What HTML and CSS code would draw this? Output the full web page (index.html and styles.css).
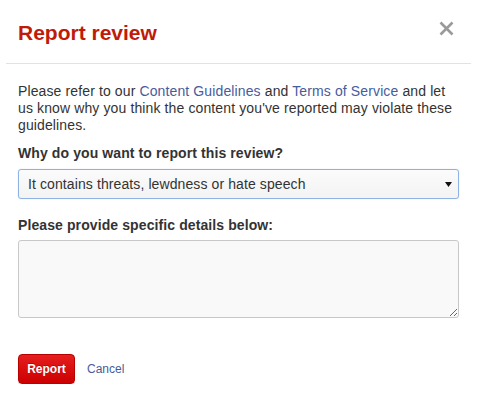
FILE: index.html
```html
<!DOCTYPE html>
<html lang="en">
<head>
<meta charset="utf-8">
<title>Report review</title>
<link rel="stylesheet" href="styles.css">
</head>
<body>
<div class="modal">
  <div class="modal-header">
    <h2 class="modal-title">Report review</h2>
    <button class="close" type="button" aria-label="Close">
      <svg width="15" height="15" viewBox="0 0 15 15"><path d="M1.5 1.5 L13.5 13.5 M13.5 1.5 L1.5 13.5" stroke="#9a9a9a" stroke-width="2.6" stroke-linecap="butt"/></svg>
    </button>
  </div>
  <div class="modal-body">
    <p class="intro">Please refer to our <a href="#">Content Guidelines</a> and <a href="#">Terms of Service</a> and let us know why you think the content you've reported may violate these guidelines.</p>
    <label class="field-label" for="reason">Why do you want to report this review?</label>
    <div class="select-wrap">
      <select id="reason" class="select">
        <option>It contains threats, lewdness or hate speech</option>
      </select>
      <svg class="select-arrow" width="7" height="5" viewBox="0 0 7 5"><path d="M0 0 H7 L3.5 5 Z" fill="#111"/></svg>
    </div>
    <label class="field-label second" for="details">Please provide specific details below:</label>
    <textarea id="details" class="details"></textarea>
    <div class="actions">
      <button class="btn-report" type="button">Report</button>
      <a href="#" class="cancel">Cancel</a>
    </div>
  </div>
</div>
</body>
</html>
```
FILE: styles.css
```css
html, body {
  margin: 0;
  padding: 0;
  background: #fff;
}
body {
  font-family: "Liberation Sans", Arial, sans-serif;
  color: #333;
  font-size: 14px;
}
.modal {
  margin: 0 6px;
}
.modal-header {
  display: flex;
  justify-content: space-between;
  align-items: flex-start;
  padding: 21px 12px 18px;
  border-bottom: 1px solid #e2e2e2;
}
.modal-title {
  margin: 0;
  font-size: 21px;
  line-height: 24px;
  font-weight: bold;
  color: #c01a08;
}
.close {
  border: 0;
  background: none;
  padding: 0;
  margin: 0 5px 0 0;
  width: 15px;
  height: 15px;
  display: block;
  cursor: pointer;
}
.close svg { display: block; }
.modal-body {
  padding: 0 12px;
}
.intro {
  margin: 19px 0 0;
  line-height: 17px;
  letter-spacing: 0.12px;
}
.intro a, .cancel {
  color: #475c9c;
  text-decoration: none;
}
.field-label {
  display: block;
  font-weight: bold;
  line-height: 17px;
  margin: 11px 0 7px;
  letter-spacing: 0.1px;
}
.field-label.second {
  margin-top: 18px;
  margin-bottom: 6px;
}
.select-wrap {
  position: relative;
}
.select {
  -webkit-appearance: none;
  appearance: none;
  display: block;
  width: 100%;
  height: 30px;
  box-sizing: border-box;
  margin: 0;
  padding: 0 20px 0 9px;
  border: 1px solid #8fb1e3;
  border-radius: 3px;
  background: linear-gradient(#fbfbfb, #f3f3f3);
  box-shadow: 0 0 1px rgba(120,160,220,0.6);
  font-family: "Liberation Sans", Arial, sans-serif;
  font-size: 14px;
  color: #333;
  letter-spacing: 0.1px;
  outline: none;
}
.select-arrow {
  position: absolute;
  right: 7px;
  top: 13px;
  pointer-events: none;
}
.details {
  display: block;
  width: 100%;
  height: 78px;
  box-sizing: border-box;
  margin: 0;
  border: 1px solid #c8c8c8;
  border-radius: 3px;
  background: #f9f9f9;
  font-family: "Liberation Sans", Arial, sans-serif;
  font-size: 14px;
  resize: vertical;
}
.actions {
  display: flex;
  align-items: center;
  gap: 12px;
  margin-top: 36px;
}
.btn-report {
  height: 30px;
  width: 57px;
  padding: 0;
  border: 1px solid #b80000;
  border-radius: 4px;
  background: linear-gradient(#e61e1e, #cc0000);
  color: #fff;
  font-family: "Liberation Sans", Arial, sans-serif;
  font-size: 12px;
  font-weight: bold;
  text-shadow: 0 -1px 0 rgba(0,0,0,0.25);
  box-shadow: 0 1px 1px rgba(0,0,0,0.15);
  cursor: pointer;
}
.cancel {
  font-size: 12px;
}
```
